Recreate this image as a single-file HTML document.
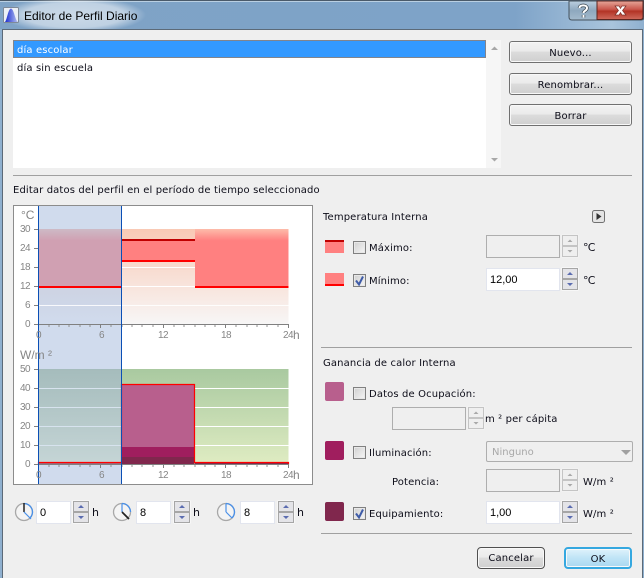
<!DOCTYPE html>
<html><head><meta charset="utf-8"><style>
html,body{margin:0;padding:0}
body{width:644px;height:578px;overflow:hidden;position:relative;background:#efefef;font:10px "DejaVu Sans","Liberation Sans",sans-serif;color:#111}
div,span.t{position:absolute}
.t{white-space:nowrap;line-height:12px;margin-top:2px;letter-spacing:.13px;color:#0c0c18}
.t.a{font:10px/12px "Liberation Sans",sans-serif;letter-spacing:-.6px;color:#858585;margin-top:1px}
.t.h{font:12px/12px "Liberation Sans",sans-serif;letter-spacing:0;color:#858585;margin-top:1px}
.btn{border:1px solid #707070;border-radius:3px;background:linear-gradient(#f2f2f2 0,#ebebeb 45%,#dcdcdc 50%,#cfcfcf 100%);box-sizing:border-box;text-align:center;box-shadow:inset 0 0 0 1px #f8f8f8;letter-spacing:.13px;color:#0c0c18}
.sep{height:1px;background:#a0a0a0}
.inp{box-sizing:border-box;background:#fff;border:1px solid #e2e5ee;height:23px;line-height:23px;padding-left:3px;font:11px/23px "Liberation Sans",sans-serif;color:#000}
.dis{background:#efefef;border:1px solid #aeaeae}
.sw{width:19px;height:19px;left:325px;border-radius:2px}
.cb{width:13px;height:13px;left:353px;box-sizing:border-box;border:1px solid #808080;background:linear-gradient(135deg,#d0d0d0,#f6f6f6);box-shadow:inset 0 0 0 1px #e8e8e8}
</style></head><body>
<svg width="644" height="578" style="position:absolute;left:0;top:0">
<defs>
<linearGradient id="tb" x1="0" x2="1" y1="0" y2="0"><stop offset="0" stop-color="#7fa3c6"/><stop offset=".8" stop-color="#7ea3c8"/><stop offset=".95" stop-color="#a9c4dc"/><stop offset="1" stop-color="#8fb0cf"/></linearGradient>
<radialGradient id="glow" cx=".5" cy=".5" r=".5"><stop offset="0" stop-color="#fff" stop-opacity=".6"/><stop offset=".7" stop-color="#fff" stop-opacity=".5"/><stop offset="1" stop-color="#fff" stop-opacity="0"/></radialGradient>
<linearGradient id="cl" x1="0" x2="0" y1="0" y2="1"><stop offset="0" stop-color="#e6a79a"/><stop offset=".45" stop-color="#c9574c"/><stop offset=".55" stop-color="#b33426"/><stop offset="1" stop-color="#cf6a5c"/></linearGradient>
<linearGradient id="hp" x1="0" x2="0" y1="0" y2="1"><stop offset="0" stop-color="#bccfe0"/><stop offset=".5" stop-color="#8ea8be"/><stop offset="1" stop-color="#a4bbcd"/></linearGradient>
<linearGradient id="ic" x1="0" x2="1" y1="0" y2="0"><stop offset="0" stop-color="#1a2ad0"/><stop offset="1" stop-color="#b8c4f0"/></linearGradient>
<linearGradient id="g1" x1="0" x2="0" y1="0" y2="1"><stop offset="0" stop-color="#f9c9b5"/><stop offset="1" stop-color="#f7f6f6"/></linearGradient>
<linearGradient id="g1s" x1="0" x2="0" y1="0" y2="1"><stop offset="0" stop-color="#c9c6d2"/><stop offset="1" stop-color="#d0dbed"/></linearGradient>
<linearGradient id="r1" x1="0" x2="0" y1="0" y2="1"><stop offset="0" stop-color="#fdbcaa"/><stop offset=".2" stop-color="#ff8080"/><stop offset="1" stop-color="#ff8080"/></linearGradient>
<linearGradient id="r1s" x1="0" x2="0" y1="0" y2="1"><stop offset="0" stop-color="#cdbac6"/><stop offset=".2" stop-color="#d0a0b2"/><stop offset="1" stop-color="#d0a0b2"/></linearGradient>
<linearGradient id="g2" x1="0" x2="0" y1="0" y2="1"><stop offset="0" stop-color="#a9c9a0"/><stop offset="1" stop-color="#dfecc2"/></linearGradient>
<linearGradient id="g2s" x1="0" x2="0" y1="0" y2="1"><stop offset="0" stop-color="#a5bcbc"/><stop offset="1" stop-color="#c5d5d6"/></linearGradient>
<g id="spin"><rect x="-.5" y="-.5" width="17" height="23" fill="#fff"/><rect x=".5" y=".5" width="15" height="10" fill="#e4e4e8" stroke="#a6a6a6"/><rect x=".5" y="11.5" width="15" height="10" fill="#e4e4e8" stroke="#a6a6a6"/><path d="M5 7h6l-3-3zM5 15h6l-3 3z" fill="#5b6cb0"/></g>
<g id="spind"><rect x="-.5" y="-.5" width="17" height="23" fill="#f6f6f6"/><rect x=".5" y=".5" width="15" height="10" fill="#efefef" stroke="#c4c4c4"/><rect x=".5" y="11.5" width="15" height="10" fill="#efefef" stroke="#c4c4c4"/><path d="M5.500 7h5l-2.500-2.500zM5.500 15h5l-2.500 2.500z" fill="#a8a8a8"/></g>
<g id="chk"><path d="M-3.500 0l3 4l4-8" fill="none" stroke="#3f5ca8" stroke-width="2"/></g>
</defs>
<!-- titlebar -->
<rect width="644" height="30" fill="url(#tb)"/>
<rect y="0" width="644" height="1" fill="#4a5a6a"/><rect y="1" width="644" height="1" fill="#b9cfe2"/>
<ellipse cx="74" cy="15" rx="72" ry="18" fill="url(#glow)"/>
<rect x="3.500" y="7.500" width="15" height="15" rx="1" fill="#ecf0f6" stroke="#7e8a98"/>
<path d="M5 22C7 20 8 9 11 8.500C14 9 15 20 18 22z" fill="url(#ic)"/>
<path d="M569 1h75v16q0 3-3 3h-69q-3 0-3-3z" fill="url(#hp)" stroke="#45535f"/>
<path d="M597 1h46v16q0 2.500-3 2.500h-43z" fill="url(#cl)" stroke="#5c2620"/>
<path d="M615 6h4l1.500 2.500L622 6h4l-3.500 4.500L626 15h-4l-1.500-2.500L619 15h-4l3.500-4.500z" fill="#fff" stroke="#7c3028" stroke-width=".7"/>
<path d="M579.500 8c0-3.500 7.500-3.500 7.500 0c0 3-3.500 2.500-3.500 5M583.500 15v2.500" fill="none" stroke="#39454f" stroke-width="3.400"/>
<path d="M579.500 8c0-3.500 7.500-3.500 7.500 0c0 3-3.500 2.500-3.500 5M583.500 15v2.500" fill="none" stroke="#fff" stroke-width="2"/>
<!-- window frame -->
<rect x="2" y="29" width="642" height="549" fill="#efefef"/>
<rect x="2" y="29" width="640" height="1" fill="#5c6a78"/>
<rect x="2" y="29" width="1" height="549" fill="#5c6a78"/><rect x="0" y="29" width="2" height="549" fill="#8fb0cf"/>
<rect x="642" y="29" width="1" height="549" fill="#5c6a78"/><rect x="643" y="29" width="1" height="549" fill="#8fb0cf"/>
<!-- list -->
<rect x="13" y="40" width="473" height="128" fill="#fff"/>
<rect x="486" y="40" width="15" height="128" fill="#f6f6f6"/>
<rect x="13" y="40" width="473" height="18" fill="#3399ff"/>
<rect x="13.500" y="40.500" width="472" height="17" fill="none" stroke="#d0701a" stroke-dasharray="1 1"/>
<path d="M491 50h7l-3.500-3.500z" fill="#a8a8a8"/><path d="M491 158h7l-3.500 3.500z" fill="#a8a8a8"/>
<!-- chart -->
<rect x="13.500" y="205.500" width="299" height="279" fill="#fff" stroke="#8c8c8c"/>
<rect x="38" y="206" width="83.500" height="278" fill="#d0dbed"/>
<rect x="121.500" y="229" width="167" height="95" fill="url(#g1)"/>
<rect x="38" y="229" width="83.500" height="95" fill="url(#g1s)"/>
<g fill="#fff"><rect x="121.500" y="267" width="167" height="1"/><rect x="121.500" y="286" width="167" height="1"/><rect x="38" y="305" width="250.500" height="1" opacity=".85"/></g>
<rect x="38" y="229" width="83.500" height="58" fill="url(#r1s)"/>
<rect x="195" y="229" width="93.500" height="58" fill="url(#r1)"/>
<rect x="121.500" y="240" width="73.500" height="21" fill="#ff8080"/>
<rect x="121.500" y="239" width="73.500" height="2" fill="#c00000"/>
<rect x="121.500" y="260" width="73.500" height="2" fill="#ff0000"/>
<rect x="38" y="286" width="83.500" height="2" fill="#ff0000"/><rect x="195" y="286" width="93.500" height="2" fill="#ff0000"/>
<path d="M38 324.500H289M38.500 229V324M34 229.500h4M34 248.500h4M34 267.500h4M34 286.500h4M34 305.500h4M34 324.500h4M38.500 325v3M100.500 325v3M163.500 325v3M225.500 325v3M288.500 325v3" stroke="#808080" stroke-width="1" fill="none"/>
<path d="M49 325v2M59 325v2M69 325v2M80 325v2M90 325v2M111 325v2M122 325v2M132 325v2M142 325v2M153 325v2M174 325v2M184 325v2M195 325v2M205 325v2M215 325v2M236 325v2M247 325v2M257 325v2M267 325v2M278 325v2" stroke="#909090"/>
<!-- chart 2 -->
<rect x="121.500" y="369" width="167" height="95" fill="url(#g2)"/>
<rect x="38" y="369" width="83.500" height="95" fill="url(#g2s)"/>
<g fill="#fff"><rect x="121.500" y="388" width="167" height="1"/><rect x="121.500" y="407" width="167" height="1"/><rect x="121.500" y="426" width="167" height="1"/><rect x="121.500" y="445" width="167" height="1"/></g>
<g fill="#d7e3ee"><rect x="38" y="388" width="83.500" height="1"/><rect x="38" y="407" width="83.500" height="1"/><rect x="38" y="426" width="83.500" height="1"/><rect x="38" y="445" width="83.500" height="1"/></g>
<rect x="121.500" y="384.500" width="73" height="79.500" fill="#b85f8d"/>
<rect x="121.500" y="447" width="73" height="17" fill="#a01e5e"/>
<rect x="121.500" y="457" width="73" height="7" fill="#80274d"/>
<rect x="38" y="463" width="83.500" height="1.500" fill="#80274d" opacity=".6"/><rect x="195" y="463" width="93.500" height="1.500" fill="#80274d"/>
<path d="M38.500 464.500V462.500H121.500V384.500H194.500V462.500H288.500V464.500" fill="none" stroke="#ff0000" stroke-width="1.200"/>
<path d="M38 464.500H289M34 369.500h4M34 388.500h4M34 407.500h4M34 426.500h4M34 445.500h4M34 464.500h4M38.500 465v3M100.500 465v3M163.500 465v3M225.500 465v3M288.500 465v3" stroke="#808080" fill="none"/>
<path d="M49 465v2M59 465v2M69 465v2M80 465v2M90 465v2M111 465v2M122 465v2M132 465v2M142 465v2M153 465v2M174 465v2M184 465v2M195 465v2M205 465v2M215 465v2M236 465v2M247 465v2M257 465v2M267 465v2M278 465v2" stroke="#909090"/>
<rect x="38" y="206" width="1" height="278" fill="#0b4fb5"/>
<rect x="121" y="206" width="1" height="278" fill="#0b4fb5"/>
<!-- clocks -->
<circle cx="24" cy="512" r="8.500" fill="#f4f4f4" stroke="#a8a8a8" stroke-width="1.300"/>
<path d="M24 503.500A8.500 8.500 0 0 1 30 518" fill="none" stroke="#4a90e8" stroke-width="1.300"/><path d="M24 512V503" stroke="#222" stroke-width="1.500"/><path d="M24 512L31 519" stroke="#4a90e8" stroke-width="1.200"/>
<circle cx="122" cy="512" r="8.500" fill="#f4f4f4" stroke="#a8a8a8" stroke-width="1.300"/>
<path d="M122 503.500A8.500 8.500 0 0 1 130.500 512" fill="none" stroke="#4a90e8" stroke-width="1.300"/><path d="M122 512V503.500" stroke="#4a90e8" stroke-width="1.200"/><path d="M122 512L129 519" stroke="#222" stroke-width="1.700"/>
<circle cx="226" cy="512" r="8.500" fill="#f4f4f4" stroke="#a8a8a8" stroke-width="1.300"/>
<path d="M226 503.500A8.500 8.500 0 0 1 232 518" fill="none" stroke="#4a90e8" stroke-width="1.300"/><path d="M226 512V503.500M226 512L232 518" stroke="#4a90e8" stroke-width="1.200"/>
<use href="#spin" x="73" y="501"/><use href="#spin" x="174" y="501"/><use href="#spin" x="278" y="501"/>
<use href="#spind" x="562" y="235"/><use href="#spin" x="562" y="268"/>
<use href="#spind" x="468" y="407"/><use href="#spind" x="562" y="469"/><use href="#spin" x="562" y="501"/>
<!-- play -->
<rect x="592.500" y="210.500" width="12" height="12" rx="2" fill="#e4e4e4" stroke="#707070"/><path d="M596.500 213v7l5-3.500z" fill="#333"/>
</svg>

<span class="t" style="left:24px;top:9px;margin-top:0;letter-spacing:0;font:12px/14px 'Liberation Sans',sans-serif;color:#000">Editor de Perfil Diario</span>
<span class="t" style="left:17px;top:43px;color:#fff">día escolar</span>
<span class="t" style="left:17px;top:61px">día sin escuela</span>
<div class="btn" style="left:509px;top:41px;width:123px;height:22px;line-height:23px">Nuevo...</div>
<div class="btn" style="left:509px;top:73px;width:123px;height:22px;line-height:23px">Renombrar...</div>
<div class="btn" style="left:509px;top:104px;width:123px;height:22px;line-height:23px">Borrar</div>
<div class="sep" style="left:13px;top:175px;width:619px"></div>
<span class="t" style="left:13px;top:183px">Editar datos del perfil en el período de tiempo seleccionado</span>

<span class="t h" style="left:21px;top:208px">°C</span>
<span class="t a" style="left:20px;top:223px">30</span>
<span class="t a" style="left:20px;top:242px">24</span>
<span class="t a" style="left:20px;top:261px">18</span>
<span class="t a" style="left:20px;top:280px">12</span>
<span class="t a" style="left:25px;top:299px">6</span>
<span class="t a" style="left:25px;top:318px">0</span>
<span class="t a" style="left:36px;top:329px">0</span>
<span class="t a" style="left:99px;top:329px">6</span>
<span class="t a" style="left:158px;top:329px">12</span>
<span class="t a" style="left:221px;top:329px">18</span>
<span class="t a" style="left:283px;top:329px">24</span><span class="t h" style="left:293px;top:328px">h</span>

<span class="t h" style="left:20px;top:348px">W/m ²</span>
<span class="t a" style="left:20px;top:363px">50</span>
<span class="t a" style="left:20px;top:382px">40</span>
<span class="t a" style="left:20px;top:401px">30</span>
<span class="t a" style="left:20px;top:420px">20</span>
<span class="t a" style="left:20px;top:439px">10</span>
<span class="t a" style="left:25px;top:458px">0</span>
<span class="t a" style="left:36px;top:469px">0</span>
<span class="t a" style="left:99px;top:469px">6</span>
<span class="t a" style="left:158px;top:469px">12</span>
<span class="t a" style="left:221px;top:469px">18</span>
<span class="t a" style="left:283px;top:469px">24</span><span class="t h" style="left:293px;top:468px">h</span>

<div class="inp" style="left:36px;top:501px;width:35px">0</div><span class="t" style="left:92px;top:505px;font-size:11px">h</span>
<div class="inp" style="left:136px;top:501px;width:35px">8</div><span class="t" style="left:193px;top:505px;font-size:11px">h</span>
<div class="inp" style="left:240px;top:501px;width:35px">8</div><span class="t" style="left:297px;top:505px;font-size:11px">h</span>

<span class="t" style="left:323px;top:210px">Temperatura Interna</span>
<div style="left:325px;top:240px;width:19px;height:13px;background:#ff8080;border-top:2px solid #c00000;box-sizing:border-box"></div>
<div style="left:325px;top:273px;width:19px;height:13px;background:#ff8080;border-bottom:2px solid #ff0000;box-sizing:border-box"></div>
<div class="cb" style="top:241px"></div><span class="t" style="left:369px;top:241px">Máximo:</span>
<div class="inp dis" style="left:486px;top:235px;width:74px"></div><span class="t" style="left:583px;top:240px;letter-spacing:-.8px;font-size:11px">°C</span>
<div class="cb" style="top:274px"></div>
<svg width="13" height="13" style="position:absolute;left:353px;top:274px"><use href="#chk" x="6.500" y="6.500"/></svg>
<span class="t" style="left:369px;top:274px">Mínimo:</span>
<div class="inp" style="left:486px;top:268px;width:74px">12,00</div><span class="t" style="left:583px;top:273px;letter-spacing:-.8px;font-size:11px">°C</span>

<div class="sep" style="left:321px;top:347px;width:311px"></div>
<span class="t" style="left:323px;top:356px">Ganancia de calor Interna</span>
<div class="sw" style="top:382px;background:#b85f8d"></div>
<div class="cb" style="top:387px"></div><span class="t" style="left:369px;top:387px">Datos de Ocupación:</span>
<div class="inp dis" style="left:392px;top:407px;width:74px"></div><span class="t" style="left:485px;top:412px">m ² per cápita</span>
<div class="sw" style="top:441px;background:#a01e5e"></div>
<div class="cb" style="top:446px"></div><span class="t" style="left:369px;top:446px">Iluminación:</span>
<div class="inp dis" style="left:486px;top:441px;width:147px;height:21px;padding-left:5px;color:#a8a8a8;font:10px/21px 'DejaVu Sans',sans-serif;border-radius:2px">Ninguno</div>
<svg width="12" height="8" style="position:absolute;left:621px;top:449px"><path d="M0 1h10l-5 5z" fill="#a0a0a0"/></svg>
<span class="t" style="left:392px;top:475px">Potencia:</span>
<div class="inp dis" style="left:486px;top:469px;width:74px"></div><span class="t" style="left:583px;top:475px">W/m ²</span>
<div class="sw" style="top:502px;background:#80274d"></div>
<div class="cb" style="top:507px"></div>
<svg width="13" height="13" style="position:absolute;left:353px;top:507px"><use href="#chk" x="6.500" y="6.500"/></svg>
<span class="t" style="left:369px;top:507px">Equipamiento:</span>
<div class="inp" style="left:486px;top:501px;width:74px">1,00</div><span class="t" style="left:583px;top:507px">W/m ²</span>
<div class="sep" style="left:321px;top:533px;width:311px"></div>
<div class="btn" style="left:477px;top:547px;width:68px;height:22px;line-height:22px;border-color:#505050;border-radius:4px">Cancelar</div>
<div class="btn" style="left:564px;top:547px;width:68px;height:22px;line-height:21px;border:2px solid #35a8e0;border-radius:4px;background:linear-gradient(#dff2fb,#bfe4f6 50%,#a9d8f0)">OK</div>
</body></html>
